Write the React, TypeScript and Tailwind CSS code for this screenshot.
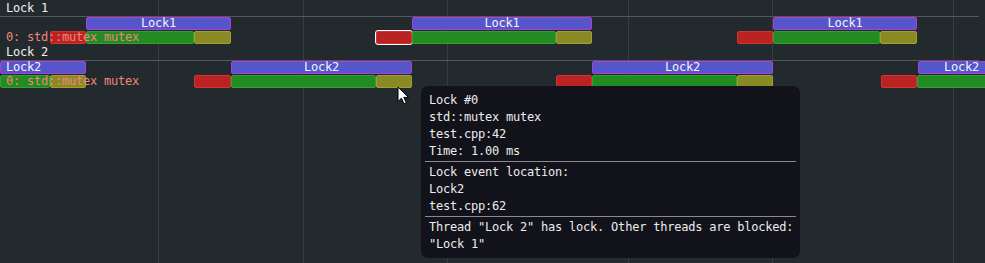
import React from 'react';

type Kind = 'lock' | 'red' | 'green' | 'olive';

type Seg = {
  x: number;
  w: number;
  kind: Kind;
  label?: string;
  align?: 'left' | 'center' | 'right';
  hot?: boolean;
};

const kindClass: Record<Kind, string> = {
  lock: 'bg-[#5555cc] border border-[#b53ad8]',
  red: 'bg-[#bb2323] border border-[#cf3535]',
  green: 'bg-[#228b22] border border-[#34a034]',
  olive: 'bg-[#8a8a24] border border-[#a0a034]',
};

const lock1Bars: Seg[] = [
  { x: 86, w: 145, kind: 'lock', label: 'Lock1' },
  { x: 412, w: 180, kind: 'lock', label: 'Lock1' },
  { x: 773, w: 144, kind: 'lock', label: 'Lock1' },
];

const lock1States: Seg[] = [
  { x: 50, w: 36, kind: 'red' },
  { x: 86, w: 108, kind: 'green' },
  { x: 194, w: 37, kind: 'olive' },
  { x: 376, w: 36, kind: 'red', hot: true },
  { x: 412, w: 144, kind: 'green' },
  { x: 556, w: 36, kind: 'olive' },
  { x: 737, w: 36, kind: 'red' },
  { x: 773, w: 107, kind: 'green' },
  { x: 880, w: 37, kind: 'olive' },
];

const lock2Bars: Seg[] = [
  { x: 0, w: 86, kind: 'lock', label: 'Lock2', align: 'left' },
  { x: 231, w: 181, kind: 'lock', label: 'Lock2' },
  { x: 592, w: 181, kind: 'lock', label: 'Lock2' },
  { x: 918, w: 70, kind: 'lock', label: 'Lock2', align: 'right' },
];

const lock2States: Seg[] = [
  { x: 0, w: 50, kind: 'green' },
  { x: 50, w: 36, kind: 'olive' },
  { x: 194, w: 37, kind: 'red' },
  { x: 231, w: 145, kind: 'green' },
  { x: 376, w: 36, kind: 'olive' },
  { x: 556, w: 36, kind: 'red' },
  { x: 592, w: 145, kind: 'green' },
  { x: 737, w: 36, kind: 'olive' },
  { x: 881, w: 36, kind: 'red' },
  { x: 917, w: 70, kind: 'green' },
];

const gridX = [158, 303, 447, 628, 772, 953];

function Lane({ segs, text }: { segs: Seg[]; text?: string }) {
  return (
    <div className="relative h-[14px]">
      {segs.map((s, i) => (
        <div
          key={i}
          className={`absolute top-0 h-[13px] rounded-[2px] ${kindClass[s.kind]} ${
            s.hot ? 'outline-[1.5px] outline-white outline' : ''
          }`}
          style={{ left: s.x, width: s.w }}
        >
          {s.label && (
            <div
              className={`-mt-px h-[13px] leading-[13px] text-[#f4f4f4] whitespace-nowrap ${
                s.align === 'left' ? 'text-left pl-[5px]' : s.align === 'right' ? 'text-right pr-[8px]' : 'text-center'
              }`}
            >
              {s.label}
            </div>
          )}
        </div>
      ))}
      {text && (
        <div className="absolute left-[6px] top-0 leading-[13px] text-[#f2857a] whitespace-nowrap">{text}</div>
      )}
    </div>
  );
}

function Header({ title }: { title: string }) {
  return (
    <>
      <div className="h-[16px] pl-[6px] pt-[2px] leading-[13px] text-[#f0f0f0]">{title}</div>
      <div className="h-px w-[979px] bg-[#53585c]" />
    </>
  );
}

function Cursor() {
  return (
    <svg className="absolute left-[397px] top-[86px]" width="14" height="19" viewBox="0 0 14 19">
      <path
        d="M1 1 L1 15.5 L4.4 12.2 L7 17.8 L9.3 16.7 L6.8 11.4 L11.5 11.4 Z"
        fill="#ffffff"
        stroke="#000000"
        strokeWidth="1"
        strokeLinejoin="miter"
      />
    </svg>
  );
}

function Tooltip() {
  const line = 'h-[17px] leading-[17px] whitespace-nowrap';
  return (
    <div className="absolute left-[421px] top-[86px] w-[379px] h-[172px] rounded-[7px] bg-[#12121b] px-[8px] pt-[6px] text-[#ececec]">
      <div className={line}>Lock #0</div>
      <div className={line}>std::mutex mutex</div>
      <div className={line}>test.cpp:42</div>
      <div className={line}>Time: 1.00 ms</div>
      <div className="-mx-[4px] mt-[1px] mb-[2px] h-px bg-[#8a8a8e]" />
      <div className={line}>Lock event location:</div>
      <div className={line}>Lock2</div>
      <div className={line}>test.cpp:62</div>
      <div className="-mx-[4px] mt-[1px] mb-[2px] h-px bg-[#8a8a8e]" />
      <div className={line}>Thread "Lock 2" has lock. Other threads are blocked:</div>
      <div className={line}>"Lock 1"</div>
    </div>
  );
}

export default function App() {
  return (
    <div
      className="relative w-[985px] h-[263px] overflow-hidden bg-[#232a2e] text-[12px] tracking-[-0.22px]"
      style={{ fontFamily: '"DejaVu Sans Mono", "Liberation Mono", monospace' }}
    >
      {/* time grid */}
      {gridX.map((x) => (
        <div key={x} className="absolute top-0 h-full w-px bg-[#363e42]" style={{ left: x }} />
      ))}

      <div className="relative">
        <Header title="Lock 1" />
        <Lane segs={lock1Bars} />
        <Lane segs={lock1States} text="0: std::mutex mutex" />
        <div className="h-[15px] pl-[6px] pt-[1px] leading-[13px] text-[#f0f0f0]">Lock 2</div>
        <div className="h-px w-[979px] bg-[#53585c]" />
        <Lane segs={lock2Bars} />
        <Lane segs={lock2States} text="0: std::mutex mutex" />
      </div>

      <Tooltip />
      <Cursor />
    </div>
  );
}
